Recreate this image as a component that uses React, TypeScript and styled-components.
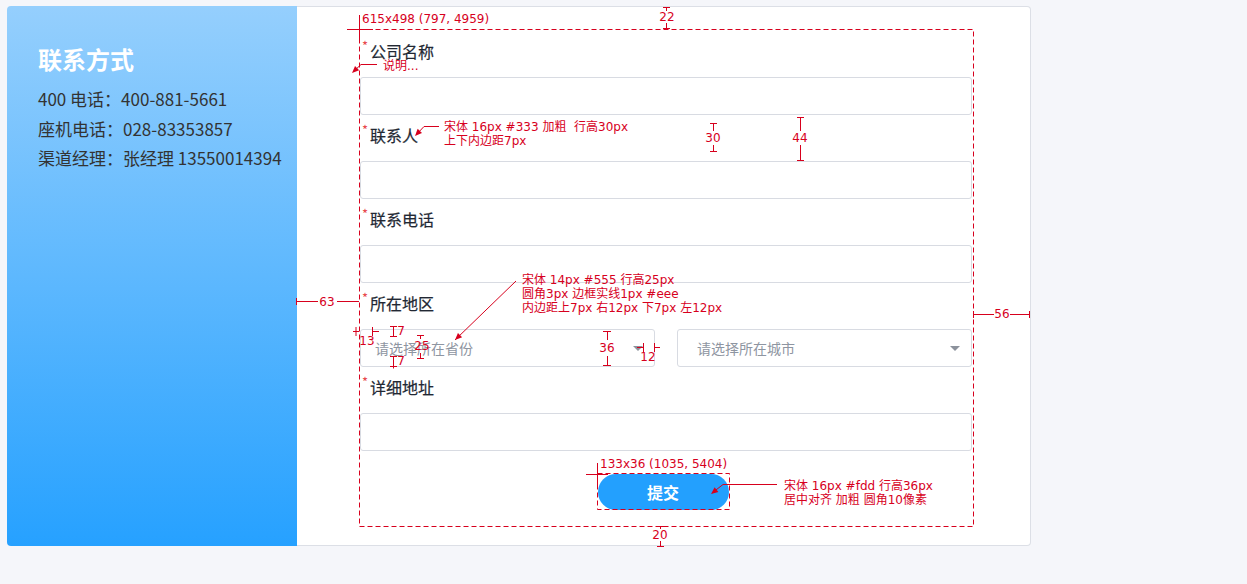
import React from "react";
import styled, { createGlobalStyle } from "styled-components";

const RED = "#d7001d";

const GlobalStyle = createGlobalStyle`
  html, body { margin: 0; padding: 0; background: #f5f6fa; }
  body { font-family: "Noto Sans CJK SC", "Noto Sans", sans-serif; }
  * { box-sizing: border-box; }
`;

const Page = styled.div`
  position: relative;
  width: 1247px;
  height: 584px;
  padding: 6px 0 0 7px;
  overflow: hidden;
`;

const Card = styled.div`
  display: flex;
  width: 1024px;
  height: 540px;
`;

const Sidebar = styled.aside`
  width: 290px;
  flex: none;
  padding: 38px 0 0 31px;
  border-radius: 4px 0 0 4px;
  background: linear-gradient(180deg, #95cffd 0%, #26a1ff 100%);
`;

const SideTitle = styled.h2`
  margin: 0 0 10px;
  font-size: 24px;
  line-height: 30px;
  font-weight: 700;
  color: #fff;
`;

const ContactLine = styled.p`
  margin: 0;
  font-size: 17px;
  line-height: 29.5px;
  color: #333;
  white-space: nowrap;
`;

const Main = styled.main`
  flex: 1;
  padding: 22px 56px 0 62px;
  background: #fff;
  border: 1px solid #dcdfe6;
  border-left: none;
  border-radius: 0 4px 4px 0;
`;

const Form = styled.form`
  width: 615px;
  height: 498px;
  margin: 0;
  padding: 2px 2px 0 1px;
  display: flex;
  flex-direction: column;
`;

const Label = styled.div`
  height: 44px;
  padding: 5px 0 9px 2px;
  margin-bottom: 2px;
  font-size: 16px;
  line-height: 30px;
  font-weight: 400;
  color: #222833;
  -webkit-text-stroke: 0.2px #222833;
`;

const Required = styled.span`
  color: #e8474b;
  font-size: 13px;
  line-height: 19px;
  vertical-align: top;
  margin-right: 2px;
  -webkit-text-stroke: 0;
`;

const TextInput = styled.input`
  display: block;
  width: 100%;
  height: 38px;
  margin: 0;
  padding: 7px 12px;
  border: 1px solid #d8dbe2;
  border-radius: 3px;
  background: #fff;
  font: inherit;
  outline: none;
`;

const SelectRow = styled.div`
  display: grid;
  grid-template-columns: 1fr 1fr;
  gap: 22px;
`;

const Select = styled.div<{ $indent: number }>`
  display: flex;
  align-items: center;
  justify-content: space-between;
  height: 38px;
  padding: 0 11px 0 ${(p) => p.$indent}px;
  border: 1px solid #d8dbe2;
  border-radius: 3px;
  background: #fff;
`;

const Placeholder = styled.span`
  font-size: 14px;
  line-height: 25px;
  color: #8e95a1;
`;

const Caret = styled.span`
  width: 0;
  height: 0;
  border-left: 5px solid transparent;
  border-right: 5px solid transparent;
  border-top: 5px solid #8c929c;
`;

const ButtonRow = styled.div`
  display: flex;
  justify-content: center;
  padding-right: 6px;
  margin-top: 23px;
`;

const SubmitButton = styled.button`
  width: 131px;
  height: 36px;
  border: none;
  border-radius: 18px;
  background: #23a0fe;
  color: #fff;
  font-family: inherit;
  font-size: 16px;
  font-weight: 700;
  line-height: 36px;
  padding: 0;
`;

const Overlay = styled.div`
  position: absolute;
  inset: 0;
  pointer-events: none;
`;

const Drawing = styled.svg`
  position: absolute;
  inset: 0;
`;

const Note = styled.div<{ $x: number; $y: number }>`
  position: absolute;
  left: ${(p) => p.$x}px;
  top: ${(p) => p.$y}px;
  font-family: "DejaVu Sans", "Noto Sans CJK SC", sans-serif;
  font-size: 12px;
  line-height: 14px;
  color: ${RED};
  white-space: nowrap;
`;

const DimLabel = styled(Note)`
  transform: translate(-50%, -50%);
`;

function arrowHead(tx: number, ty: number, fx: number, fy: number, len = 7, half = 3) {
  const dx = tx - fx;
  const dy = ty - fy;
  const d = Math.hypot(dx, dy);
  const ux = dx / d;
  const uy = dy / d;
  const bx = tx - ux * len;
  const by = ty - uy * len;
  return `${tx},${ty} ${bx - uy * half},${by + ux * half} ${bx + uy * half},${by - ux * half}`;
}

const fields = ["公司名称", "联系人", "联系电话"];

const dimPaths = [
  // 22
  "M663 7.5H670 M666.5 7.5V11 M666.5 23V28.5 M663 28.5H670",
  // 30
  "M710 123.5H717 M713.5 123.5V131 M713.5 145V151.5 M710 151.5H717",
  // 44
  "M797 117.5H804 M800.5 117.5V131 M800.5 145V160.5 M797 160.5H804",
  // 63
  "M296.5 298V305 M296.5 301.5H318 M337 301.5H359",
  // 56
  "M973.5 311V318 M973.5 314.5H994 M1010 314.5H1029 M1029.5 311V318",
  // 13
  "M353 331.5H359 M372.5 327V336 M372.5 331.5H379 M356 327V336",
  // 7 top
  "M390 326.5H397 M393.5 326.5V336.5 M390 336.5H397",
  // 7 bottom
  "M390 356.5H397 M393.5 356.5V368.5 M390 366.5H397",
  // 25
  "M417 335.5H424 M420.5 335.5V339 M420.5 353V358.5 M417 358.5H424",
  // 36
  "M603 331.5H611 M607.5 331.5V340 M607.5 356V365.5 M603 365.5H611",
  // 12
  "M637 347.5H643 M643.5 343V352 M654.5 343V352 M654.5 347.5H660",
  // 20
  "M657 526.5H664 M660.5 526.5V529 M660.5 541V546 M657 546.5H664",
  // crosshairs
  "M347 29.5H373 M359.5 15V43",
  "M586 474.5H608 M597.5 463V485",
];

export default function App() {
  return (
    <>
      <GlobalStyle />
      <Page>
        <Card>
          <Sidebar>
            <SideTitle>联系方式</SideTitle>
            <ContactLine>400 电话：400-881-5661</ContactLine>
            <ContactLine>座机电话：028-83353857</ContactLine>
            <ContactLine>渠道经理：张经理 13550014394</ContactLine>
          </Sidebar>
          <Main>
            <Form onSubmit={(e) => e.preventDefault()}>
              {fields.map((f) => (
                <React.Fragment key={f}>
                  <Label>
                    <Required>*</Required>
                    {f}
                  </Label>
                  <TextInput readOnly />
                </React.Fragment>
              ))}
              <Label>
                <Required>*</Required>所在地区
              </Label>
              <SelectRow>
                <Select $indent={14}>
                  <Placeholder>请选择所在省份</Placeholder>
                  <Caret />
                </Select>
                <Select $indent={19}>
                  <Placeholder>请选择所在城市</Placeholder>
                  <Caret />
                </Select>
              </SelectRow>
              <Label>
                <Required>*</Required>详细地址
              </Label>
              <TextInput readOnly />
              <ButtonRow>
                <SubmitButton type="submit">提交</SubmitButton>
              </ButtonRow>
            </Form>
          </Main>
        </Card>

        <Overlay>
          <Drawing width="1247" height="584" viewBox="0 0 1247 584">
            <g fill="none" stroke={RED} strokeWidth="1">
              <rect x="359.5" y="29.5" width="614" height="497" strokeDasharray="5 3" />
              <rect x="597.5" y="473.5" width="132" height="36" strokeDasharray="5 3" />
              {dimPaths.map((d, i) => (
                <path key={i} d={d} />
              ))}
              <polyline points="353,72 361,64.5 377,64.5" />
              <polyline points="416,135 424,126.5 439,126.5" />
              <polyline points="455,340 516,281" />
              <polyline points="712,493 723,484.5 777,484.5" />
            </g>
            <g fill={RED}>
              <polygon points={arrowHead(352, 73, 361, 64.5)} />
              <polygon points={arrowHead(415, 136, 424, 126.5)} />
              <polygon points={arrowHead(455, 340, 516, 281)} />
              <polygon points={arrowHead(711, 494, 723, 484.5)} />
            </g>
          </Drawing>

          <Note $x={362} $y={12}>615x498 (797, 4959)</Note>
          <Note $x={383} $y={59}>说明...</Note>
          <Note $x={444} $y={120}>
            宋体 16px #333 加粗&nbsp;&nbsp;行高30px
            <br />
            上下内边距7px
          </Note>
          <Note $x={522} $y={273}>
            宋体 14px #555 行高25px
            <br />
            圆角3px 边框实线1px #eee
            <br />
            内边距上7px 右12px 下7px 左12px
          </Note>
          <Note $x={600} $y={457}>133x36 (1035, 5404)</Note>
          <Note $x={784} $y={479}>
            宋体 16px #fdd 行高36px
            <br />
            居中对齐 加粗 圆角10像素
          </Note>

          <DimLabel $x={667} $y={17}>22</DimLabel>
          <DimLabel $x={713} $y={138}>30</DimLabel>
          <DimLabel $x={800} $y={138}>44</DimLabel>
          <DimLabel $x={327} $y={302}>63</DimLabel>
          <DimLabel $x={1002} $y={314}>56</DimLabel>
          <DimLabel $x={367} $y={341}>13</DimLabel>
          <DimLabel $x={401} $y={331}>7</DimLabel>
          <DimLabel $x={422} $y={346}>25</DimLabel>
          <DimLabel $x={401} $y={361}>7</DimLabel>
          <DimLabel $x={607} $y={348}>36</DimLabel>
          <DimLabel $x={648} $y={357}>12</DimLabel>
          <DimLabel $x={660} $y={535}>20</DimLabel>
        </Overlay>
      </Page>
    </>
  );
}
